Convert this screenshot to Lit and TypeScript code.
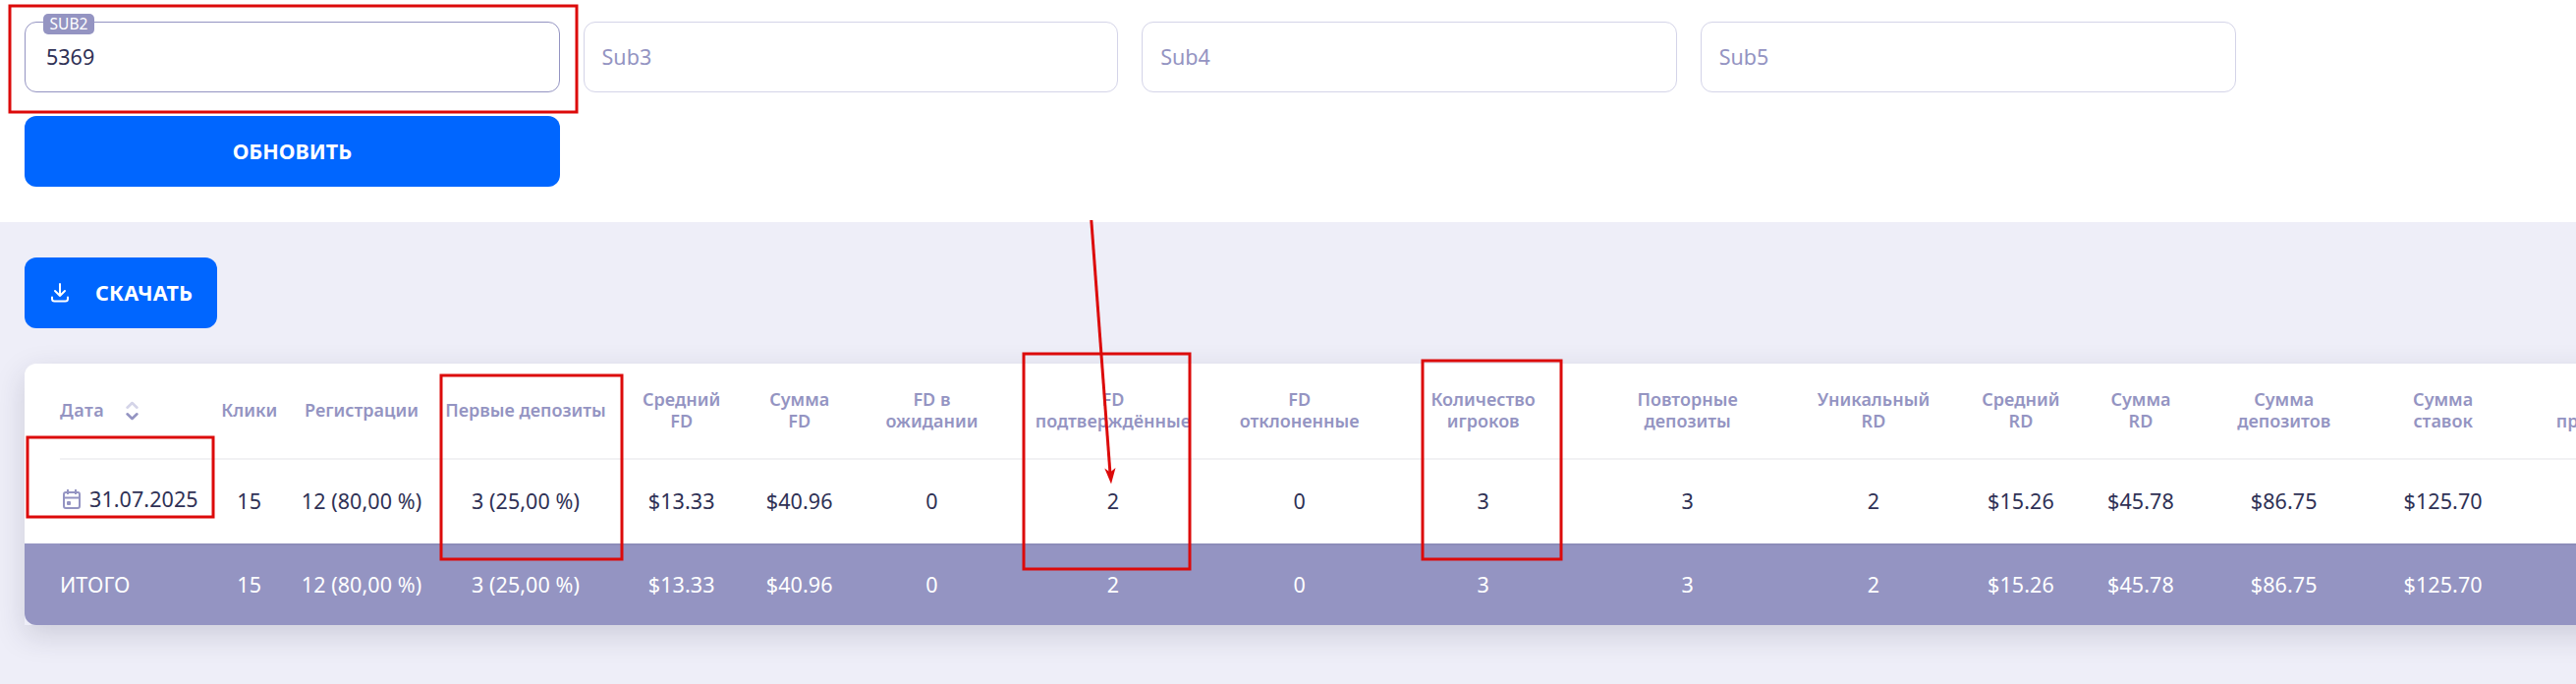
import { LitElement, html, css, svg } from "lit";
import { customElement } from "lit/decorators.js";

interface Column {
  title: string[];
  width: number;
  value: string;
}

const columns: Column[] = [
  { title: ["Клики"], width: 90, value: "15" },
  { title: ["Регистрации"], width: 138.6, value: "12 (80,00 %)" },
  { title: ["Первые депозиты"], width: 195.4, value: "3 (25,00 %)" },
  { title: ["Средний", "FD"], width: 122, value: "$13.33" },
  { title: ["Сумма", "FD"], width: 118, value: "$40.96" },
  { title: ["FD в", "ожидании"], width: 151.6, value: "0" },
  { title: ["FD", "подтверждённые"], width: 217.4, value: "2" },
  { title: ["FD", "отклоненные"], width: 162, value: "0" },
  { title: ["Количество", "игроков"], width: 212, value: "3" },
  { title: ["Повторные", "депозиты"], width: 204, value: "3" },
  { title: ["Уникальный", "RD"], width: 174.6, value: "2" },
  { title: ["Средний", "RD"], width: 125.4, value: "$15.26" },
  { title: ["Сумма", "RD"], width: 118.6, value: "$45.78" },
  { title: ["Сумма", "депозитов"], width: 173, value: "$86.75" },
  { title: ["Сумма", "ставок"], width: 150.8, value: "$125.70" },
];

const marks = [
  [10, 6, 577, 108],
  [28, 445, 189, 81],
  [449, 382, 184, 187],
  [1042, 360, 169, 219],
  [1448, 367, 141, 202],
];

@customElement("app-root")
export class AppRoot extends LitElement {
  static styles = css`
    :host {
      display: block;
      position: relative;
      height: 696px;
      overflow: hidden;
      background: #eeeef8;
      color: #2f3155;
      font: 400 21.5px/28px "Noto Sans", "Open Sans", sans-serif;
    }
    * { box-sizing: border-box; }
    .filters {
      height: 226px;
      padding: 22px 0 0 25px;
      background: #fff;
    }
    .grid {
      display: grid;
      width: 2250.5px;
      grid-template-columns: repeat(4, 1fr);
      column-gap: 23.8px;
      row-gap: 24px;
      grid-auto-rows: 72px;
    }
    .field {
      position: relative;
      display: flex;
      align-items: center;
      padding: 0 18px;
      border: 1px solid #d4d4e8;
      border-radius: 12px;
      color: #9494c2;
    }
    .field.filled {
      padding-left: 21px;
      border-color: #9494c2;
      color: #2f3155;
    }
    .tag {
      position: absolute;
      left: 18px;
      top: -9px;
      width: 52px;
      height: 21px;
      border-radius: 5px;
      background: #9494c2;
      color: #fff;
      font-size: 15.5px;
      line-height: 21px;
      text-align: center;
    }
    .button {
      display: flex;
      align-items: center;
      justify-content: center;
      height: 72px;
      border: 0;
      border-radius: 12px;
      background: #0066ff;
      color: #fff;
      font: inherit;
      font-weight: 700;
      padding: 0;
    }
    .report { padding: 36px 0 0 25px; }
    .download {
      width: 196px;
      justify-content: flex-start;
      padding-left: 26px;
      gap: 26px;
      letter-spacing: 0.25px;
    }
    .download svg { width: 20px; height: 20px; }
    .table {
      width: 2820px;
      margin-top: 36px;
      border-radius: 12px 12px 0 0;
      background: linear-gradient(#fff, #fff) 0 0 / 100% 20px no-repeat, #eeeef8;
      background: #eeeef8;
      box-shadow: 0 10px 30px rgba(40, 40, 70, 0.17);
    }
    .row { display: flex; padding-left: 36px; background: #fff; }
    .cell {
      flex: none;
      display: flex;
      flex-direction: column;
      align-items: center;
      justify-content: center;
      white-space: nowrap;
    }
    .first {
      width: 147.7px;
      flex-direction: row;
      justify-content: flex-start;
    }
    .head {
      height: 96px;
      padding-bottom: 2px;
      border-radius: 12px 12px 0 0;
      color: #9494c2;
      font-size: 18px;
      font-weight: 600;
      line-height: 22px;
    }
    .head .first { gap: 22px; letter-spacing: 0.5px; }
    .head .first svg { width: 13px; height: 20px; margin-top: 2px; }
    .rule { padding-left: 36px; background: #fff; }
    .line { height: 2px; background: #f1f1f3; }
    .body { height: 85px; padding-bottom: 2px; }
    .body .cell, .total .cell { letter-spacing: 0.08px; }
    .body .first { padding: 0 0 4px 3px; gap: 9px; }
    .body .first svg { width: 18px; height: 20px; margin-top: 1px; }
    .total {
      height: 83px;
      border-radius: 0 0 12px 12px;
      background: linear-gradient(#8c8cb9, #8c8cb9) 36px 0 / 100% 2px no-repeat, #9494c2;
      color: #fff;
    }
    .last { width: 198px; }
    .marks {
      position: absolute;
      inset: 0;
      width: 2622px;
      height: 696px;
      pointer-events: none;
    }
  `;

  render() {
    return html`
      <section class="filters">
        <div class="grid">
          <label class="field filled"><span class="tag">SUB2</span>5369</label>
          ${["Sub3", "Sub4", "Sub5"].map((name) => html`<label class="field">${name}</label>`)}
          <button class="button">ОБНОВИТЬ</button>
        </div>
      </section>
      <section class="report">
        <button class="button download">
          <svg viewBox="0 0 20 20" fill="none" stroke="#fff" stroke-width="2" stroke-linecap="round" stroke-linejoin="round">
            <path d="M10 1V13M5 8L10 13L15 8M2 14.5V16Q2 18.5 4.5 18.5H15.5Q18 18.5 18 16V14.5" />
          </svg>
          СКАЧАТЬ
        </button>
        <div class="table">
          <div class="row head">
            <div class="cell first">
              Дата
              <svg viewBox="0 0 13 20" fill="none" stroke-width="2.6" stroke-linecap="round" stroke-linejoin="round">
                <path d="M1.6 6.7L6.5 2L11.4 6.7" stroke="#d4d4e8" />
                <path d="M1.6 13.3L6.5 18L11.4 13.3" stroke="#9494c2" />
              </svg>
            </div>
            ${columns.map((c) => html`
              <div class="cell" style="width:${c.width}px">${c.title.map((t) => html`<span>${t}</span>`)}</div>`)}
            <div class="cell last"><span>Сумма</span><span>проигрышей</span></div>
          </div>
          <div class="rule"><div class="line"></div></div>
          <div class="row body">
            <div class="cell first">
              <svg viewBox="0 0 18 20" fill="none" stroke="#9494c2" stroke-width="2">
                <rect x="1" y="3" width="16" height="16" rx="2" />
                <path d="M1 8.5H17M5 0V5M13 0V5" />
                <rect x="4" y="12" width="4" height="4" rx="1" fill="#9494c2" stroke="none" />
              </svg>
              31.07.2025
            </div>
            ${columns.map((c) => html`<div class="cell" style="width:${c.width}px">${c.value}</div>`)}
          </div>
          <div class="row total">
            <div class="cell first">ИТОГО</div>
            ${columns.map((c) => html`<div class="cell" style="width:${c.width}px">${c.value}</div>`)}
          </div>
        </div>
      </section>
      <svg class="marks" viewBox="0 0 2622 696" fill="none" stroke="#dc0a0a" stroke-width="3">
        ${marks.map(([x, y, w, h]) => svg`<rect x=${x} y=${y} width=${w} height=${h} />`)}
        <path d="M1110.8 224L1130 482" />
        <path d="M1131 492.5L1124.3 476.5L1130 480.5L1135.5 476Z" fill="#dc0a0a" stroke="none" />
      </svg>
    `;
  }
}
